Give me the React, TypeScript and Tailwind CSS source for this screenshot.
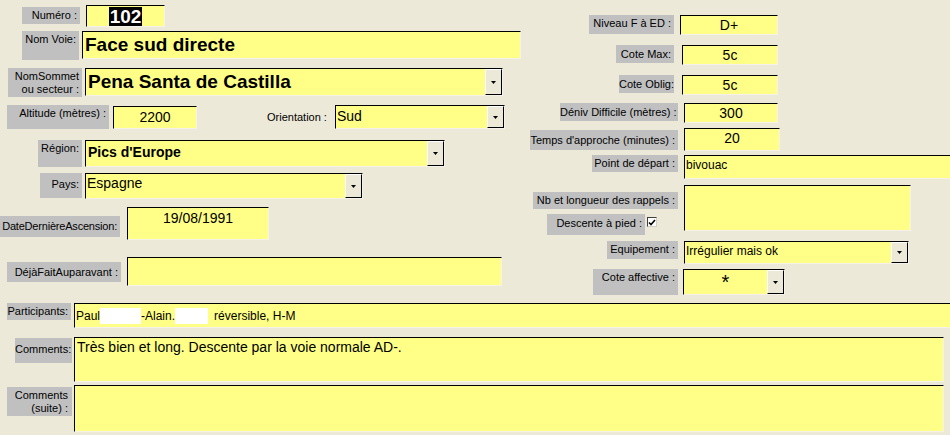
import React from "react";

const lbl =
  "bg-[#c0c0c0] text-[11px] leading-[13px] text-black text-right whitespace-nowrap pr-[3px] pt-[2px] shrink-0";
const fld =
  "flex shrink-0 bg-[#ffff88] border-t border-l border-t-black border-l-black border-b border-r border-b-[#f4f2ea] border-r-[#f4f2ea] overflow-hidden";

const Arrow = () => (
  <div className="w-[17px] h-full shrink-0 bg-[#ece9d8] border-l border-t border-l-white border-t-white border-r border-b border-r-black border-b-black flex items-center justify-center">
    <svg width="5" height="3" viewBox="0 0 5 3">
      <path d="M0 0h5L2.5 3z" fill="#000" />
    </svg>
  </div>
);

export default function App() {
  return (
    <div className="w-[950px] h-[435px] bg-[#ece9d8] overflow-hidden font-['Liberation_Sans',Arial,sans-serif] text-black">
      <div className="flex h-[295px]">
        {/* left column */}
        <div className="w-[525px] shrink-0 flex flex-col">
          <div className="flex mt-[5px] h-[22px]">
            <div className={`${lbl} ml-[22px] mt-[2px] w-[58px] h-[17px]`}>Numéro :</div>
            <div className={`${fld} ml-[6px] w-[79px] h-[22px] justify-center items-center`}>
              <span className="bg-black text-white font-bold text-[19px] leading-[19px] px-[1px]">102</span>
            </div>
          </div>
          <div className="flex mt-[4px] h-[29px]">
            <div className={`${lbl} ml-[22px] w-[57px] h-[29px]`}>Nom Voie:</div>
            <div className={`${fld} ml-[3px] w-[439px] h-[28px] items-center pl-[2px]`}>
              <span className="font-bold text-[19px] leading-[20px]">Face sud directe</span>
            </div>
          </div>
          <div className="flex mt-[8px] h-[29px]">
            <div className={`${lbl} ml-[8px] w-[74px] h-[29px] pt-[1px] leading-[12px]`}>
              NomSommet
              <br />
              ou secteur :
            </div>
            <div className={`${fld} ml-[3px] w-[418px] h-[28px] items-stretch`}>
              <div className="flex-1 flex items-center pl-[2px]">
                <span className="font-bold text-[19px] leading-[20px]">Pena Santa de Castilla</span>
              </div>
              <Arrow />
            </div>
          </div>
          <div className="flex mt-[8px] h-[24px] items-start">
            <div className={`${lbl} ml-[7px] w-[102px] h-[24px]`}>Altitude (mètres) :</div>
            <div className={`${fld} ml-[4px] mt-[1px] w-[84px] h-[23px] justify-center items-center`}>
              <span className="text-[14px]">2200</span>
            </div>
            <div className="ml-[70px] mt-[6px] w-[64px] text-[11px] leading-[13px] whitespace-nowrap">Orientation :</div>
            <div className={`${fld} ml-[4px] w-[170px] h-[24px]`}>
              <div className="flex-1 pl-[1px] text-[14px] leading-[20px]">Sud</div>
              <Arrow />
            </div>
          </div>
          <div className="flex mt-[11px] h-[27px]">
            <div className={`${lbl} ml-[38px] w-[44px] h-[27px]`}>Région:</div>
            <div className={`${fld} ml-[3px] w-[360px] h-[27px]`}>
              <div className="flex-1 pl-[2px] font-bold text-[14px] leading-[22px]">Pics d'Europe</div>
              <Arrow />
            </div>
          </div>
          <div className="flex mt-[5px] h-[27px] items-start">
            <div className={`${lbl} ml-[40px] mt-[1px] w-[42px] h-[25px] pt-[5px]`}>Pays:</div>
            <div className={`${fld} ml-[3px] mt-[1px] w-[278px] h-[26px]`}>
              <div className="flex-1 pl-[1px] text-[14px] leading-[18px]">Espagne</div>
              <Arrow />
            </div>
          </div>
          <div className="flex mt-[8px] h-[33px] items-start">
            <div className={`${lbl} mt-[9px] w-[120px] h-[21px] pt-[4px] pr-[1px] tracking-[-0.2px]`}>DateDernièreAscension:</div>
            <div className={`${fld} ml-[7px] w-[142px] h-[33px] justify-center`}>
              <span className="text-[14px] leading-[20px]">19/08/1991</span>
            </div>
          </div>
          <div className="flex mt-[17px] h-[29px] items-start">
            <div className={`${lbl} ml-[7px] mt-[5px] w-[114px] h-[20px] pt-[4px]`}>DéjàFaitAuparavant :</div>
            <div className={`${fld} ml-[6px] w-[375px] h-[29px]`} />
          </div>
        </div>

        {/* right column */}
        <div className="flex-1 flex flex-col">
          <div className="flex mt-[15px] h-[19px]">
            <div className={`${lbl} ml-[64px] w-[85px] h-[19px]`}>Niveau F à ED :</div>
            <div className={`${fld} ml-[6px] w-[98px] h-[20px] justify-center`}>
              <span className="text-[14px] leading-[18px]">D+</span>
            </div>
          </div>
          <div className="flex mt-[11px] h-[20px]">
            <div className={`${lbl} ml-[91px] w-[58px] h-[18px] pt-[3px]`}>Cote Max:</div>
            <div className={`${fld} ml-[8px] w-[96px] h-[20px] justify-center`}>
              <span className="text-[14px] leading-[18px]">5c</span>
            </div>
          </div>
          <div className="flex mt-[10px] h-[20px]">
            <div className={`${lbl} ml-[94px] w-[55px] h-[18px] pt-[3px]`}>Cote Oblig:</div>
            <div className={`${fld} ml-[8px] w-[96px] h-[20px] justify-center`}>
              <span className="text-[14px] leading-[18px]">5c</span>
            </div>
          </div>
          <div className="flex mt-[8px] h-[20px]">
            <div className={`${lbl} ml-[35px] w-[118px] h-[18px] pt-[3px]`}>Déniv Difficile (mètres) :</div>
            <div className={`${fld} ml-[6px] w-[94px] h-[20px] justify-center`}>
              <span className="text-[14px] leading-[18px]">300</span>
            </div>
          </div>
          <div className="flex mt-[5px] h-[23px] items-start">
            <div className={`${lbl} ml-[5px] mt-[2px] w-[148px] h-[20px] pt-[4px]`}>Temps d'approche (minutes) :</div>
            <div className={`${fld} ml-[6px] w-[96px] h-[23px] justify-center border-t-[#ffff88]`}>
              <span className="text-[14px] leading-[18px]">20</span>
            </div>
          </div>
          <div className="flex mt-[4px] h-[24px] items-start">
            <div className={`${lbl} ml-[67px] w-[86px] h-[17px] pt-[1px]`}>Point de départ :</div>
            <div className={`${fld} ml-[6px] w-[270px] h-[24px] pl-[1px]`}>
              <span className="text-[12px] leading-[18px]">bivouac</span>
            </div>
          </div>
          <div className="flex mt-[6px] h-[50px] items-start">
            <div className="flex flex-col items-end w-[153px] shrink-0">
              <div className={`${lbl} mt-[7px] w-[145px] h-[17px] pt-[2px]`}>Nb et longueur des rappels :</div>
              <div className="flex items-start mt-[5px] mr-[21px]">
                <div className={`${lbl} w-[98px] h-[21px] pt-[3px] pr-[2px]`}>Descente à pied :</div>
                <div className="ml-[2px] mt-[3px] w-[10px] h-[10px] bg-white border-t border-l border-t-[#404040] border-l-[#404040] border-b border-r border-b-[#d4d0c8] border-r-[#d4d0c8] flex items-center justify-center">
                  <svg width="8" height="7" viewBox="0 0 8 7">
                    <path d="M1 3.5 L3 5.5 L7 1" stroke="#000" strokeWidth="1.6" fill="none" />
                  </svg>
                </div>
              </div>
            </div>
            <div className={`${fld} ml-[6px] w-[227px] h-[46px]`} />
          </div>
          <div className="flex mt-[6px] h-[23px] items-start">
            <div className={`${lbl} ml-[82px] w-[71px] h-[18px] pt-[2px]`}>Equipement :</div>
            <div className={`${fld} ml-[6px] w-[225px] h-[23px]`}>
              <div className="flex-1 pl-[1px] text-[12px] leading-[18px]">Irrégulier mais ok</div>
              <Arrow />
            </div>
          </div>
          <div className="flex mt-[5px] h-[26px] items-start">
            <div className={`${lbl} ml-[68px] w-[85px] h-[26px] pt-[1px]`}>Cote affective :</div>
            <div className={`${fld} ml-[5px] w-[102px] h-[26px]`}>
              <div className="flex-1 text-center text-[20px] leading-[22px] pt-[1px]">*</div>
              <Arrow />
            </div>
          </div>
        </div>
      </div>

      {/* bottom rows */}
      <div className="flex mt-[8px] h-[25px] items-start">
        <div className={`${lbl} ml-[7px] w-[64px] h-[17px] pt-[1px] pr-[2px]`}>Participants:</div>
        <div className={`${fld} ml-[3px] w-[880px] h-[25px] items-center pl-[1px] text-[12px]`}>
          <span>Paul</span>
          <span className="inline-block w-[41px] h-[16px] bg-white" />
          <span>-Alain.</span>
          <span className="inline-block w-[33px] h-[16px] bg-white" />
          <span className="ml-[6px]">réversible, H-M</span>
        </div>
      </div>
      <div className="flex mt-[9px] h-[45px] items-start">
        <div className={`${lbl} ml-[15px] mt-[1px] w-[57px] h-[25px] pt-[5px] pr-[2px]`}>Comments:</div>
        <div className={`${fld} ml-[2px] w-[870px] h-[45px] pl-[2px]`}>
          <span className="text-[14px] leading-[18px]">Très bien et long. Descente par la voie normale AD-.</span>
        </div>
      </div>
      <div className="flex mt-[3px] h-[47px] items-start">
        <div className={`${lbl} ml-[7px] mt-[2px] w-[65px] h-[29px] pt-[1px] pr-[4px] leading-[13px]`}>
          Comments
          <br />
          (suite) :
        </div>
        <div className={`${fld} ml-[2px] w-[870px] h-[47px]`} />
      </div>
    </div>
  );
}
